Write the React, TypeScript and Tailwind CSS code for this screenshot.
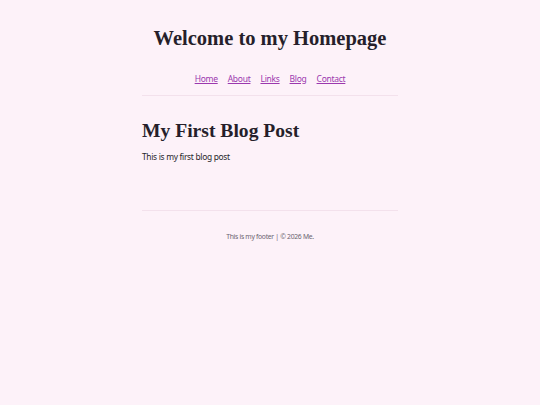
export default function App() {
  const links = ['Home', 'About', 'Links', 'Blog', 'Contact'];

  return (
    <div className="min-h-screen bg-[#fdf2f9] text-[#261f2b] font-['Noto_Sans',sans-serif]">
      <div className="mx-auto w-[256px]">
        <header className="pt-[25px] text-center">
          <h1 className="font-['Liberation_Serif',Georgia,serif] text-[20.5px] leading-[26px] font-bold">
            Welcome to my Homepage
          </h1>
          <nav className="mt-[22px] flex justify-center gap-[10px] text-[8.5px] leading-[12px] tracking-[-0.28px]">
            {links.map((l) => (
              <a key={l} href="#" className="text-[#9b38ae] underline">
                {l}
              </a>
            ))}
          </nav>
        </header>
        <hr className="mt-[10px] border-t border-[#f3e1ec]" />

        <main className="pt-[22px] pb-[47px]">
          <h2 className="font-['Liberation_Serif',Georgia,serif] text-[19.6px] leading-[26px] font-bold">
            My First Blog Post
          </h2>
          <p className="mt-[7px] text-[8.4px] leading-[12px] tracking-[-0.3px]">This is my first blog post</p>
        </main>

        <hr className="border-t border-[#f3e1ec]" />
        <footer className="pt-[21px] text-center text-[6.8px] leading-[10px] tracking-[-0.3px] text-[#6b6470]">
          This is my footer | © 2026 Me.
        </footer>
      </div>
    </div>
  );
}
